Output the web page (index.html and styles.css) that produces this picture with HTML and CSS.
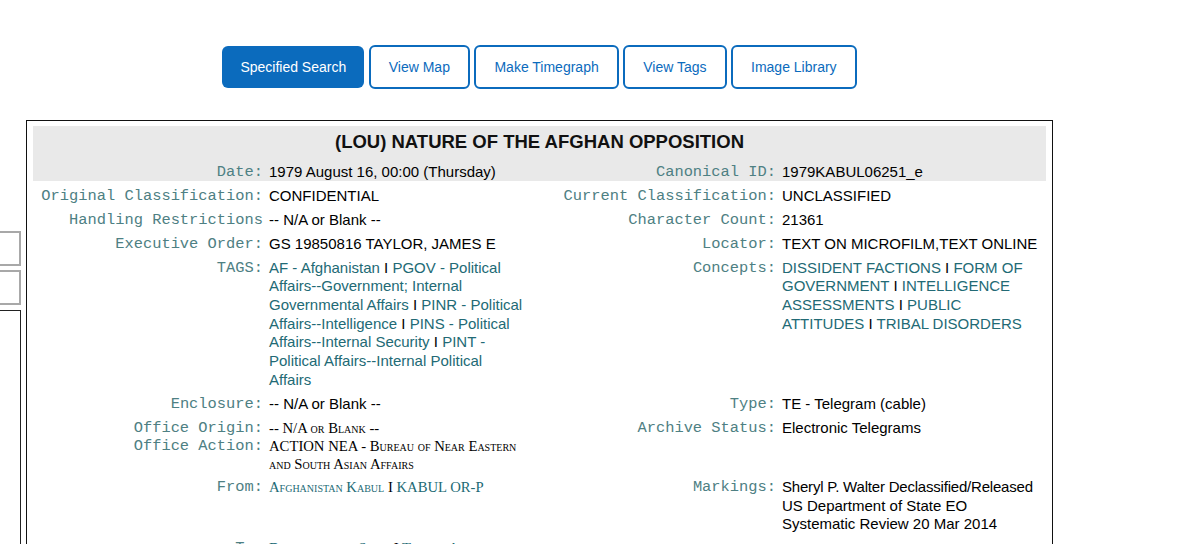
FILE: index.html
```html
<!DOCTYPE html>
<html lang="en">
<head>
<meta charset="utf-8">
<title>(LOU) NATURE OF THE AFGHAN OPPOSITION</title>
<link rel="stylesheet" href="styles.css">
</head>
<body>
<div class="layout">
  <aside class="side">
    <div class="side-box light"></div>
    <div class="side-box light second"></div>
    <div class="side-box dark"></div>
  </aside>
  <main class="main">
    <nav class="nav">
      <a class="btn btn-primary" href="#">Specified Search</a>
      <a class="btn" href="#">View Map</a>
      <a class="btn" href="#">Make Timegraph</a>
      <a class="btn" href="#">View Tags</a>
      <a class="btn" href="#">Image Library</a>
    </nav>
    <section class="doc">
      <header class="doc-head">
        <h1 class="doc-title">(LOU) NATURE OF THE AFGHAN OPPOSITION</h1>
        <div class="fields">
          <div class="lbl">Date:</div>
          <div class="val">1979 August 16, 00:00 (Thursday)</div>
          <div class="lbl">Canonical ID:</div>
          <div class="val">1979KABUL06251_e</div>
        </div>
      </header>
      <div class="fields body">
        <div class="lbl">Original Classification:</div>
        <div class="val">CONFIDENTIAL</div>
        <div class="lbl">Current Classification:</div>
        <div class="val">UNCLASSIFIED</div>

        <div class="lbl">Handling Restrictions</div>
        <div class="val">-- N/A or Blank --</div>
        <div class="lbl">Character Count:</div>
        <div class="val">21361</div>

        <div class="lbl">Executive Order:</div>
        <div class="val">GS 19850816 TAYLOR, JAMES E</div>
        <div class="lbl">Locator:</div>
        <div class="val">TEXT ON MICROFILM,TEXT ONLINE</div>

        <div class="lbl">TAGS:</div>
        <div class="val"><a class="link" href="#">AF - Afghanistan</a> I <a class="link" href="#">PGOV - Political Affairs--Government; Internal Governmental Affairs</a> I <a class="link" href="#">PINR - Political Affairs--Intelligence</a> I <a class="link" href="#">PINS - Political Affairs--Internal Security</a> I <a class="link" href="#">PINT - Political Affairs--Internal Political Affairs</a></div>
        <div class="lbl">Concepts:</div>
        <div class="val"><a class="link" href="#">DISSIDENT FACTIONS</a> I <a class="link" href="#">FORM OF GOVERNMENT</a> I <a class="link" href="#">INTELLIGENCE ASSESSMENTS</a> I <a class="link" href="#">PUBLIC ATTITUDES</a> I <a class="link" href="#">TRIBAL DISORDERS</a></div>

        <div class="lbl">Enclosure:</div>
        <div class="val">-- N/A or Blank --</div>
        <div class="lbl">Type:</div>
        <div class="val">TE - Telegram (cable)</div>

        <div class="lbl stack">
          <div>Office Origin:</div>
          <div>Office Action:</div>
        </div>
        <div class="val sc">
          <div>-- N/A or Blank --</div>
          <div>ACTION NEA - Bureau of Near Eastern and South Asian Affairs</div>
        </div>
        <div class="lbl">Archive Status:</div>
        <div class="val">Electronic Telegrams</div>

        <div class="lbl">From:</div>
        <div class="val sc"><a class="link" href="#">Afghanistan Kabul</a> I <a class="link" href="#">KABUL OR-P</a></div>
        <div class="lbl">Markings:</div>
        <div class="val"><span class="nw tight">Sheryl P. Walter Declassified/Released</span> US Department of State EO <span class="nw">Systematic Review 20 Mar 2014</span></div>

        <div class="lbl">To:</div>
        <div class="val sc"><a class="link" href="#">Department of State</a> I <a class="link" href="#">Tehran Amembassy</a></div>
        <div class="lbl"></div>
        <div class="val"></div>
      </div>
    </section>
  </main>
</div>
</body>
</html>
```

FILE: styles.css
```css
html, body {
  margin: 0;
  padding: 0;
  background: #ffffff;
}

body {
  font-family: "Liberation Sans", Arial, Helvetica, sans-serif;
  color: #000;
  overflow: hidden;
}

.layout {
  display: flex;
  align-items: flex-start;
}

.side {
  flex: 0 0 21px;
  width: 21px;
  padding-top: 231px;
  display: flex;
  flex-direction: column;
}

.side-box {
  box-sizing: border-box;
  width: 41px;
  margin-left: -20px;
  height: 35px;
}

.side-box.light {
  border: 2px solid #a8a8a8;
}

.side-box.second {
  margin-top: 4px;
}

.side-box.dark {
  margin-top: 5px;
  height: 400px;
  border: 1px solid #222;
}

.main {
  flex: 0 0 1027px;
  width: 1027px;
  margin-left: 5px;
}

.nav {
  display: flex;
  justify-content: center;
  align-items: center;
  gap: 4.5px;
  padding-top: 45px;
  height: 44px;
  box-sizing: content-box;
}

.btn {
  box-sizing: border-box;
  display: inline-flex;
  align-items: center;
  justify-content: center;
  height: 44px;
  padding: 0 18px;
  border: 2px solid #0b6bbd;
  border-radius: 6px;
  background: #fff;
  color: #0b6bbd;
  font-family: "Liberation Sans", Arial, sans-serif;
  font-size: 14px;
  text-decoration: none;
  white-space: nowrap;
}

.btn-primary {
  height: 42px;
  border: none;
  background: #0b6bbd;
  color: #fff;
  border-radius: 6px;
}

.doc {
  margin-top: 31px;
  border: 1px solid #111;
  padding: 5px 6px 60px;
  min-height: 500px;
}

.doc-head {
  background: #e9e9e9;
}

.doc-title {
  margin: 0 0 4.67px;
  font-family: "Liberation Sans", Arial, sans-serif;
  font-weight: bold;
  font-size: 18.5px;
  line-height: 32px;
  text-align: center;
  color: #111;
}

.fields {
  display: grid;
  grid-template-columns: 230px 258px 243px 264px;
  column-gap: 6px;
  row-gap: 5.33px;
  align-items: start;
}

.fields.body {
  margin-top: 5.33px;
}

.lbl {
  font-family: "Liberation Mono", "Courier New", monospace;
  font-size: 15.4px;
  line-height: 18.67px;
  color: #4e8083;
  text-align: right;
  white-space: nowrap;
}

.lbl.stack {
  line-height: 18px;
}

.val {
  font-family: "Liberation Sans", Arial, sans-serif;
  font-size: 15px;
  line-height: 18.67px;
  color: #000;
}

.val.sc {
  font-family: "Liberation Serif", "Times New Roman", serif;
  font-variant: small-caps;
  font-size: 14.7px;
  line-height: 18px;
}

.nw {
  white-space: nowrap;
}

.tight {
  letter-spacing: -0.2px;
}

.link {
  color: #226a75;
  text-decoration: none;
}
```
